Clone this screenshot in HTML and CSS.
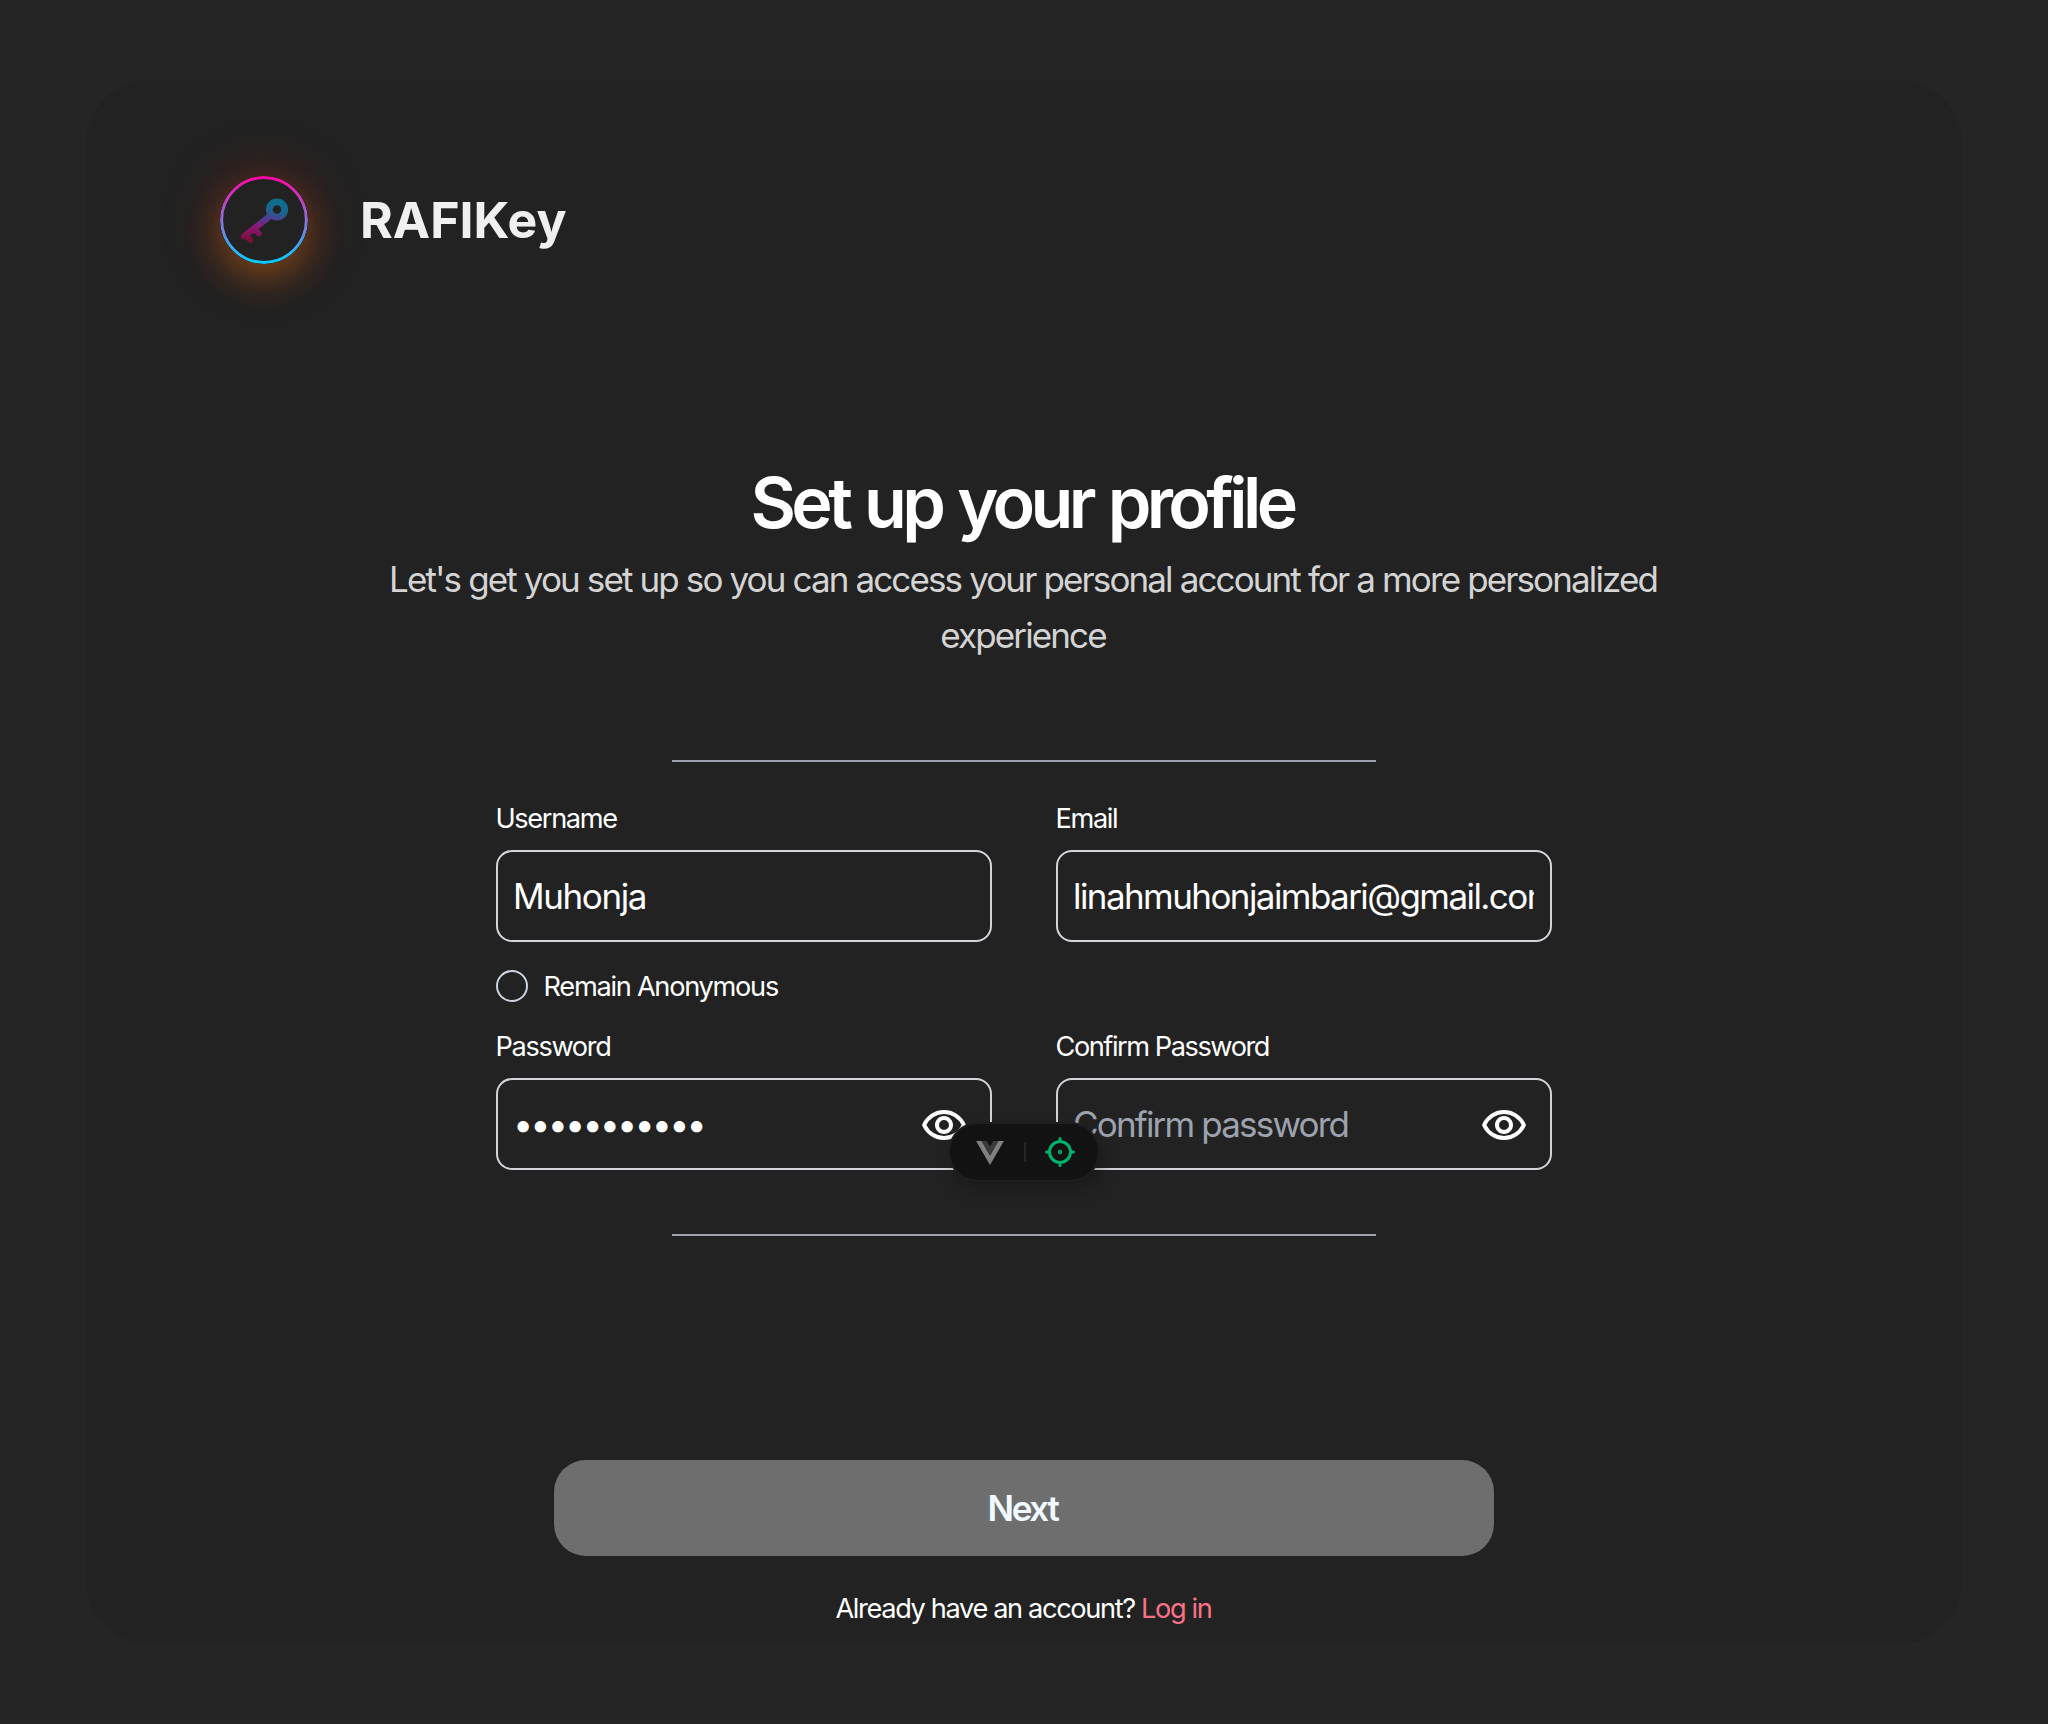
FILE: index.html
```html
<!DOCTYPE html>
<html lang="en">
<head>
<meta charset="utf-8">
<title>RAFIKey</title>
<link rel="stylesheet" href="styles.css">
</head>
<body>
<main class="card">
  <header class="brand">
    <svg class="brand-mark" viewBox="0 0 88 88" fill="none">
      <defs>
        <linearGradient id="ring" x1="0" y1="0" x2="0" y2="1">
          <stop offset="0" stop-color="#ff0aa4"/>
          <stop offset="0.5" stop-color="#8a70e0"/>
          <stop offset="1" stop-color="#08ccff"/>
        </linearGradient>
        <linearGradient id="key" gradientUnits="userSpaceOnUse" x1="52" y1="23" x2="42" y2="66">
          <stop offset="0" stop-color="#0b6f8c"/>
          <stop offset="0.25" stop-color="#1c6390"/>
          <stop offset="0.5" stop-color="#5a3590"/>
          <stop offset="0.68" stop-color="#8a1878"/>
          <stop offset="1" stop-color="#7c1040"/>
        </linearGradient>
      </defs>
      <circle cx="44" cy="44" r="42.4" stroke="url(#ring)" stroke-width="3"/>
      <g stroke="url(#key)">
        <circle cx="57" cy="33.5" r="7.7" stroke-width="6.8"/>
        <path d="M51.5 39 24 60.2" stroke-width="6.4" stroke-linecap="round"/>
        <path d="M26.2 60 30.4 64M34.6 53.500 38.800 57.500" stroke-width="5.600" stroke-linecap="round"/>
      </g>
    </svg>
    <span class="brand-name">RAFIKey</span>
  </header>

  <h1 class="title">Set up your profile</h1>
  <p class="subtitle">Let's get you set up so you can access your personal account for a more personalized experience</p>

  <hr class="rule">

  <form class="form">
    <div class="field">
      <label class="label" for="username">Username</label>
      <input class="input username" id="username" type="text" value="Muhonja">
    </div>
    <div class="field">
      <label class="label" for="email">Email</label>
      <input class="input" id="email" type="text" value="linahmuhonjaimbari@gmail.com">
    </div>
    <label class="anonymous"><span class="radio"></span><span class="anonymous-text">Remain Anonymous</span></label>
    <div class="field">
      <label class="label" for="password">Password</label>
      <div class="input secret">
        <input class="secret-input" id="password" type="password" value="abcdefghijk">
        <svg class="eye" viewBox="0 0 24 24"><path fill="currentColor" d="M12 6a9.770 9.770 0 0 1 8.820 5.500A9.770 9.770 0 0 1 12 17a9.770 9.770 0 0 1-8.820-5.500A9.770 9.770 0 0 1 12 6m0-2C7 4 2.730 7.110 1 11.500C2.730 15.890 7 19 12 19s9.270-3.110 11-7.500C21.270 7.110 17 4 12 4m0 5a2.500 2.500 0 0 1 0 5a2.500 2.500 0 0 1 0-5m0-2c-2.480 0-4.500 2.020-4.500 4.500S9.520 16 12 16s4.500-2.020 4.500-4.500S14.480 7 12 7"/></svg>
      </div>
    </div>
    <div class="field">
      <label class="label confirm-label" for="confirm">Confirm Password</label>
      <div class="input secret">
        <input class="secret-input confirm" id="confirm" type="password" placeholder="Confirm password">
        <svg class="eye" viewBox="0 0 24 24"><path fill="currentColor" d="M12 6a9.770 9.770 0 0 1 8.820 5.500A9.770 9.770 0 0 1 12 17a9.770 9.770 0 0 1-8.820-5.500A9.770 9.770 0 0 1 12 6m0-2C7 4 2.730 7.110 1 11.500C2.730 15.890 7 19 12 19s9.270-3.110 11-7.500C21.270 7.110 17 4 12 4m0 5a2.500 2.500 0 0 1 0 5a2.500 2.500 0 0 1 0-5m0-2c-2.480 0-4.500 2.020-4.500 4.500S9.520 16 12 16s4.500-2.020 4.500-4.500S14.480 7 12 7"/></svg>
      </div>
    </div>
  </form>

  <hr class="rule">

  <footer class="actions">
    <button class="next" type="button">Next</button>
    <p class="login">Already have an account? <a class="login-link" href="#">Log in</a></p>
  </footer>
</main>

<div class="devtools">
  <svg class="vue" viewBox="0 0 256 221"><path fill="#808080" d="m0 0l128 220.800L256 0h-51.200L128 132.480L50.560 0z"/><path fill="#3b3b3b" d="M50.560 0L128 133.120L204.800 0h-47.360L128 51.200L97.920 0z"/></svg>
  <span class="devtools-divider"></span>
  <svg class="target" viewBox="0 0 24 24" fill="none" stroke="#00b36c" stroke-linecap="round" stroke-linejoin="round" stroke-width="2"><circle cx="12" cy="12" r=".5"/><path d="M5 12a7 7 0 1 0 14 0a7 7 0 1 0-14 0m7-9v2m-7 7H3m9 7v2m7-9h2"/></svg>
</div>
</body>
</html>
```
FILE: styles.css
```css
* {
  box-sizing: border-box;
}

body {
  margin: 0;
  padding: 80px 86px;
  min-height: 1724px;
  background: #252525;
  color: #fff;
  font-family: Inter, "Liberation Sans", sans-serif;
  font-size: 27.2px;
  line-height: 40px;
  letter-spacing: -0.05em;
}

.card {
  display: flex;
  flex-direction: column;
  align-items: center;
  height: 1564px;
  padding: 96px 134px 15px;
  border-radius: 64px;
  background: #222;
}

.brand {
  display: flex;
  align-items: center;
  align-self: stretch;
  gap: 52px;
  height: 88px;
}

.brand-mark {
  width: 88px;
  height: 88px;
  border-radius: 50%;
  background: #222;
  box-shadow:
    0 16px 36px -2px rgba(215, 125, 15, 0.38),
    0 2px 56px rgba(210, 30, 15, 0.34);
}

.brand-name {
  color: #f0f0f0;
  font-size: 50px;
  font-weight: 700;
  letter-spacing: 0;
}

.title {
  margin: 203px 0 0;
  padding-right: 4px;
  font-size: 70px;
  font-weight: 600;
  line-height: 72px;
  letter-spacing: -0.066em;
  word-spacing: 0.04em;
}

.subtitle {
  width: 1302px;
  margin: 12px 0 1px;
  padding-right: 2px;
  color: #d4d4d4;
  font-size: 35px;
  line-height: 56px;
  letter-spacing: -0.0537em;
  text-align: center;
}

.rule {
  width: 704px;
  height: 2px;
  margin: 96px 0 37px;
  border: 0;
  background: #9ca3af;
}

.form {
  display: grid;
  grid-template-columns: 496px 496px;
  column-gap: 64px;
}

.field {
  display: flex;
  flex-direction: column;
  gap: 11px;
}

.label {
  margin-left: -0.5px;
}

.confirm-label {
  letter-spacing: -0.0535em;
}

.input {
  width: 100%;
  height: 92px;
  padding: 0 16px 1px 15px;
  border: 2px solid #d1d5db;
  border-radius: 16px;
  outline: 0;
  background: transparent;
  color: #fff;
  font-family: inherit;
  font-size: 35px;
  letter-spacing: -0.045em;
}

.username {
  letter-spacing: -0.04em;
}

.anonymous {
  display: flex;
  grid-column: 1 / -1;
  align-items: center;
  gap: 15.5px;
  height: 32px;
  margin: 28px 0 25px;
}

.anonymous-text {
  padding-top: 1px;
  letter-spacing: -0.047em;
}

.radio {
  width: 32px;
  height: 32px;
  border: 2px solid #cbd5e1;
  border-radius: 50%;
}

.secret {
  display: flex;
  align-items: center;
  padding-right: 22px;
}

.secret-input {
  flex: 1;
  min-width: 0;
  height: 87px;
  padding: 0;
  border: 0;
  outline: 0;
  background: transparent;
  color: #fff;
  font: inherit;
  font-size: 36px;
  letter-spacing: -0.0805em;
}

.confirm {
  font-size: 35px;
  letter-spacing: -0.052em;
}

.confirm::placeholder {
  color: #9ca3af;
}

.eye {
  width: 48px;
  height: 48px;
  margin-top: 5px;
}

.form + .rule {
  margin: 64px 0 0;
}

.actions {
  display: flex;
  flex-direction: column;
  align-items: center;
  gap: 33px;
  margin-top: auto;
}

.next {
  width: 940px;
  height: 96px;
  padding: 0 9px 1px 6px;
  border: 0;
  border-radius: 32px;
  background: #6e6e6e;
  color: #f0f9ff;
  font-family: inherit;
  font-size: 35px;
  font-weight: 600;
  letter-spacing: -0.066em;
}

.login {
  margin: 0;
  padding-right: 1px;
}

.login-link {
  color: #fb7185;
  text-decoration: none;
}

/* Floating toolbar that sits over the page */
.devtools {
  position: absolute;
  top: 1124px;
  left: 950px;
  display: flex;
  align-items: center;
  width: 148px;
  height: 56px;
  padding-left: 26px;
  border-radius: 28px;
  background: #121212;
  box-shadow: 0 0 0 2px #1e1e1e, 4px 8px 20px rgba(0, 0, 0, 0.3);
}

.vue {
  width: 28px;
  height: 24px;
  margin-top: 2px;
}

.devtools-divider {
  width: 2px;
  height: 20px;
  margin: 0 16px 0 20px;
  background: #262626;
}

.target {
  width: 36px;
  height: 36px;
  margin-top: -1px;
}
```
